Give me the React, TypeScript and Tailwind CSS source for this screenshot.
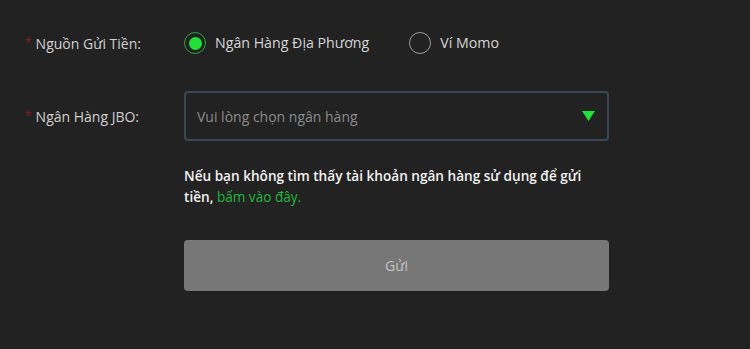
import { useState } from "react";

function Radio({ checked, label, onClick }: { checked: boolean; label: string; onClick: () => void }) {
  return (
    <button type="button" onClick={onClick} className="flex items-center gap-[9px] cursor-pointer">
      <span
        className={
          checked
            ? "flex h-[22px] w-[22px] items-center justify-center rounded-full border border-[#22a83a]"
            : "flex h-[22px] w-[22px] items-center justify-center rounded-full border border-[#9a9a9a]"
        }
      >
        {checked && <span className="h-[13px] w-[13px] rounded-full bg-[#22e03a]" />}
      </span>
      <span className="text-[14.2px] text-[#d6d6d6]">{label}</span>
    </button>
  );
}

function Label({ text }: { text: string }) {
  return (
    <div className="flex w-[159px] shrink-0 items-center text-[14px] text-[#d0d0d0]">
      <span className="mr-[4px] text-[12px] leading-none text-[#8f1c1c]">*</span>
      {text}
    </div>
  );
}

export default function App() {
  const [source, setSource] = useState("bank");

  return (
    <div className="h-[349px] w-full bg-[#222222] pl-[25px] pt-[29px]" style={{ fontFamily: '"Open Sans", "Noto Sans", sans-serif' }}>
      {/* Source row */}
      <div className="flex h-[28px] items-center">
        <Label text="Nguồn Gửi Tiền:" />
        <div className="flex items-center gap-[40px]">
          <Radio checked={source === "bank"} label="Ngân Hàng Địa Phương" onClick={() => setSource("bank")} />
          <Radio checked={source === "momo"} label="Ví Momo" onClick={() => setSource("momo")} />
        </div>
      </div>

      {/* Bank select row */}
      <div className="mt-[34px] flex items-center">
        <Label text="Ngân Hàng JBO:" />
        <div className="flex h-[50px] w-[425px] items-center justify-between rounded-[4px] border-2 border-[#3a4856] bg-[#222222] pl-[11px] pr-[12px]">
          <span className="text-[14px] text-[#8c8c8c]">Vui lòng chọn ngân hàng</span>
          <svg width="13" height="10" viewBox="0 0 13 10">
            <polygon points="0,0 13,0 6.5,10" fill="#22e03a" />
          </svg>
        </div>
      </div>

      {/* Help text */}
      <div className="ml-[159px] mt-[24px] w-[425px] text-[13.6px] font-semibold leading-[21px] text-[#f2f2f2]">
        Nếu bạn không tìm thấy tài khoản ngân hàng sử dụng để gửi tiền,{" "}
        <span className="font-normal text-[#25b83c]">bấm vào đây.</span>
      </div>

      {/* Submit */}
      <button
        type="button"
        className="ml-[159px] mt-[33px] flex h-[51px] w-[425px] items-center justify-center rounded-[4px] bg-[#777777] text-[14px] text-[#c4c4c4]"
      >
        Gửi
      </button>
    </div>
  );
}
